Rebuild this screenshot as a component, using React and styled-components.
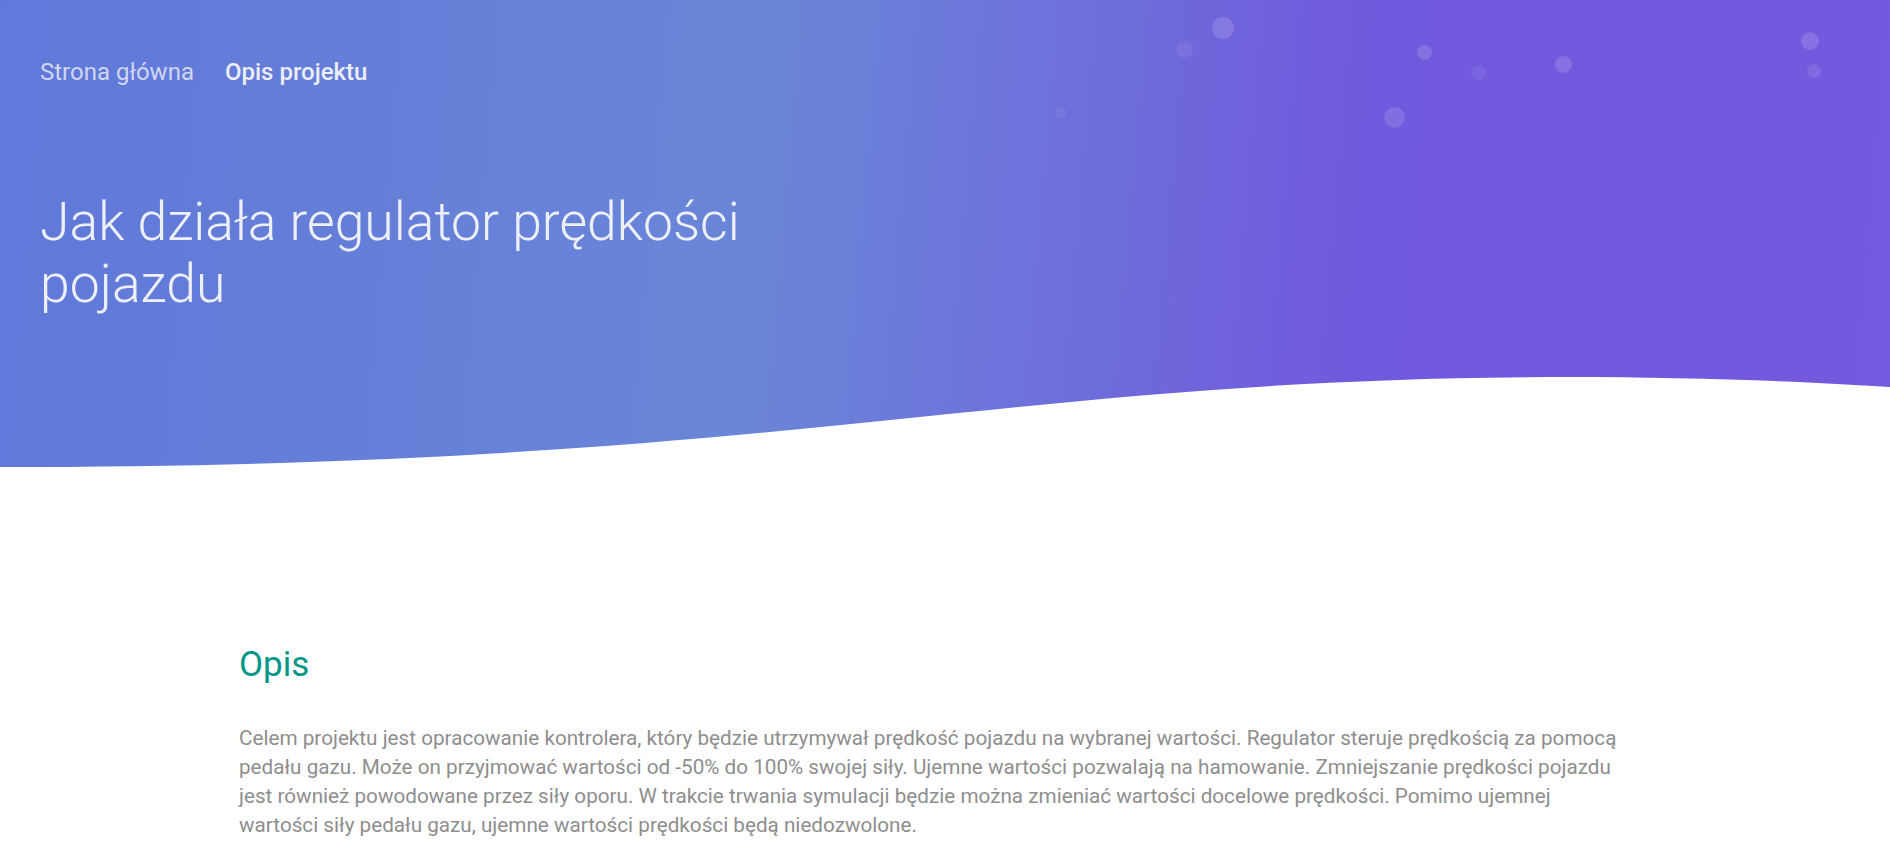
import React from 'react';
import styled, { createGlobalStyle } from 'styled-components';

const GlobalStyle = createGlobalStyle`
    html, body {
        margin: 0;
        padding: 0;
        background: #fff;
        font-family: Roboto, "Noto Sans", Arial, sans-serif;
    }
`

const Header = styled.header`
    position: relative;
    height: 468px;
    overflow: hidden;
    background: linear-gradient(95deg, #6078d9 0%, #6a86d8 40%, #7159dd 72%, #7559de 100%);
`

const Nav = styled.nav`
    display: flex;
    gap: 31px;
    height: 64px;
    margin-top: 40px;
    padding: 0 40px;
    align-items: center;
`

const NavLink = styled.a`
    font-size: 24px;
    color: ${p => (p.$active ? '#eceef8' : '#d0d6f0')};
    font-weight: ${p => (p.$active ? 500 : 400)};
    text-decoration: none;
    cursor: pointer;
`

const Title = styled.h1`
    margin: 87px 0 0 40px;
    max-width: 880px;
    font-size: 53.5px;
    font-weight: 300;
    line-height: 62px;
    color: #eef0f8;
`

const Bubble = styled.span`
    position: absolute;
    border-radius: 50%;
    background: rgba(255, 255, 255, ${p => p.$alpha});
    width: ${p => p.$size}px;
    height: ${p => p.$size}px;
    left: ${p => p.$x - p.$size / 2}px;
    top: ${p => p.$y - p.$size / 2}px;
`

const Wave = styled.svg`
    position: absolute;
    left: 0;
    bottom: 0;
    width: 100%;
    height: 96px;
    display: block;
`

const Container = styled.main`
    width: 1400px;
    margin: 0 auto 0 239px;
    padding-top: 176px;
`

const SectionTitle = styled.h2`
    margin: 0;
    font-size: 35px;
    font-weight: 400;
    line-height: 1.2;
    color: #009688;
`

const Text = styled.p`
    margin: 38px 0 0;
    font-size: 20.7px;
    font-weight: 400;
    line-height: 29px;
    color: #8e8e8e;
`

const bubbles = [
    { x: 1223, y: 28, size: 22, alpha: 0.14 },
    { x: 1184, y: 49, size: 17, alpha: 0.07 },
    { x: 1424, y: 52, size: 15, alpha: 0.14 },
    { x: 1478, y: 72, size: 15, alpha: 0.07 },
    { x: 1563, y: 64, size: 17, alpha: 0.14 },
    { x: 1394, y: 117, size: 21, alpha: 0.12 },
    { x: 1061, y: 113, size: 12, alpha: 0.05 },
    { x: 1810, y: 41, size: 18, alpha: 0.14 },
    { x: 1814, y: 71, size: 14, alpha: 0.1 },
]

const App = () => {
    return (
        <>
            <GlobalStyle />
            <Header>
                {bubbles.map((b, i) => (
                    <Bubble key={i} $x={b.x} $y={b.y} $size={b.size} $alpha={b.alpha} />
                ))}
                <Nav>
                    <NavLink>Strona główna</NavLink>
                    <NavLink $active>Opis projektu</NavLink>
                </Nav>
                <Title>Jak działa regulator prędkości pojazdu</Title>
                <Wave viewBox="0 0 1890 96" preserveAspectRatio="none">
                    <path
                        d="M0 96 L0 95 C800 95 1000 5 1570 5 C1680 5 1800 9 1890 15 L1890 96 Z"
                        fill="#fff"
                    />
                </Wave>
            </Header>
            <Container>
                <SectionTitle>Opis</SectionTitle>
                <Text>
                    Celem projektu jest opracowanie kontrolera, który będzie utrzymywał prędkość pojazdu na wybranej wartości. Regulator steruje prędkością za pomocą pedału gazu. Może on przyjmować wartości od -50% do 100% swojej siły. Ujemne wartości pozwalają na hamowanie. Zmniejszanie prędkości pojazdu jest również powodowane przez siły oporu. W trakcie trwania symulacji będzie można zmieniać wartości docelowe prędkości. Pomimo ujemnej<br />
                    wartości siły pedału gazu, ujemne wartości prędkości będą niedozwolone.
                </Text>
            </Container>
        </>
    )
}
export default App
